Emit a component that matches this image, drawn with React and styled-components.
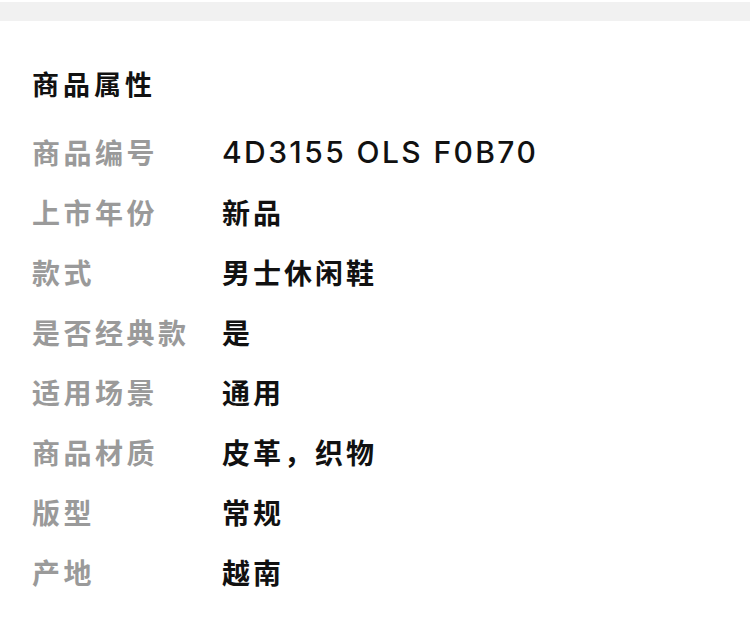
import styled, { createGlobalStyle } from 'styled-components'

const GlobalStyle = createGlobalStyle`
    body {
        margin: 0;
        background: #fff;
        font-family: "Noto Sans CJK SC", "Noto Sans", sans-serif;
    }
`

const TopBand = styled.div`
    margin-top: 2px;
    height: 19px;
    background: #f1f1f1;
`

const Section = styled.section`
    padding: 43px 32px 0;
`

const Title = styled.h2`
    margin: 0 0 18px;
    font-size: 27px;
    line-height: 40px;
    font-weight: 700;
    letter-spacing: 4px;
    color: #111;
`

const Row = styled.div`
    display: grid;
    grid-template-columns: 190px 1fr;
    align-items: center;
    height: 60px;
`

const Label = styled.span`
    font-size: 28px;
    font-weight: 700;
    letter-spacing: 3.5px;
    color: #9a9a9a;
`

const Value = styled.span`
    font-family: ${props => (props.latin ? '"Inter", "Noto Sans CJK SC", sans-serif' : 'inherit')};
    font-size: ${props => (props.latin ? '30px' : '28px')};
    font-weight: ${props => (props.latin ? 500 : 700)};
    letter-spacing: ${props => (props.latin ? '2.4px' : '3px')};
    color: #111;
`

const atributos = [
    { nome: '商品编号', valor: '4D3155 OLS F0B70', latin: true },
    { nome: '上市年份', valor: '新品' },
    { nome: '款式', valor: '男士休闲鞋' },
    { nome: '是否经典款', valor: '是' },
    { nome: '适用场景', valor: '通用' },
    { nome: '商品材质', valor: '皮革，织物' },
    { nome: '版型', valor: '常规' },
    { nome: '产地', valor: '越南' },
]

const App = () => {
    return (
        <>
            <GlobalStyle />
            <TopBand />
            <Section>
                <Title>商品属性</Title>
                {atributos.map(item => (
                    <Row key={item.nome}>
                        <Label>{item.nome}</Label>
                        <Value latin={item.latin}>{item.valor}</Value>
                    </Row>
                ))}
            </Section>
        </>
    )
}

export default App
